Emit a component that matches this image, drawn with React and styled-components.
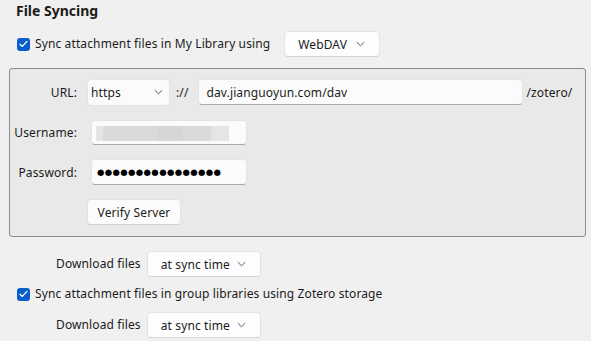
import React from "react";
import styled, { createGlobalStyle } from "styled-components";

const Global = createGlobalStyle`
  html, body { margin: 0; padding: 0; background: #f0f0f0; }
  body { font-family: "Noto Sans", "Open Sans", sans-serif; font-size: 12px; letter-spacing: 0.12px; color: #1b1b1b; }
`;

const Page = styled.div`
  width: 591px;
  height: 341px;
  overflow: hidden;
  box-sizing: border-box;
  padding-top: 1px;
`;

const Heading = styled.h2`
  margin: 0 0 0 16px;
  font-size: 14px;
  font-weight: 700;
  line-height: 20px;
  letter-spacing: 0;
  color: #1b1b1b;
`;

const Row = styled.div`
  display: flex;
  align-items: center;
  gap: ${p => p.$gap ?? 6}px;
  margin-left: ${p => p.$indent ?? 17}px;
  margin-top: ${p => p.$top ?? 0}px;
  height: ${p => p.$h ?? 26}px;
`;

const Check = styled.span`
  width: 13px;
  height: 13px;
  border-radius: 3px;
  background: #0a5ec9;
  display: inline-flex;
  align-items: center;
  justify-content: center;
  flex: none;
`;

const Label = styled.span`
  white-space: nowrap;
  line-height: 16px;
`;

const Dropdown = styled.div`
  box-sizing: border-box;
  width: ${p => p.$w}px;
  height: 26px;
  margin-left: ${p => p.$ml ?? 0}px;
  background: #fdfdfd;
  border: 1px solid #e3e3e3;
  border-bottom-color: #d4d4d4;
  border-radius: 4px;
  display: flex;
  align-items: center;
  justify-content: space-between;
  padding: 0 14px 0 13px;
  white-space: nowrap;
`;

const Group = styled.div`
  box-sizing: border-box;
  margin: 11px 5px 0 9px;
  height: 169px;
  border: 1px solid #8d8d8d;
  border-radius: 3px;
  background: #e9e9e9;
  padding: 10px 0 0 0;
  display: grid;
  grid-template-columns: 67px 1fr;
  column-gap: 10px;
  grid-auto-rows: 26px;
  row-gap: 14px;
  align-items: center;
`;

const FieldLabel = styled.span`
  text-align: right;
  white-space: nowrap;
`;

const Controls = styled.div`
  display: flex;
  align-items: center;
  gap: ${p => p.$gap ?? 0}px;
  padding-left: ${p => p.$pl ?? 0}px;
  height: 26px;
`;

const Select = styled.div`
  box-sizing: border-box;
  width: 83px;
  height: 27px;
  background: #fbfbfb;
  border: 1px solid #e4e4e4;
  border-radius: 4px;
  display: flex;
  align-items: center;
  justify-content: space-between;
  padding: 0 6px 0 3px;
`;

const Sep = styled.span`
  margin: 0 9px 0 6px;
  white-space: nowrap;
`;

const TextInput = styled.div`
  box-sizing: border-box;
  width: ${p => p.$w}px;
  height: ${p => p.$h ?? 26}px;
  background: #fbfbfb;
  border: 1px solid #e4e4e4;
  border-bottom-color: #a9a9a9;
  border-radius: 4px;
  display: flex;
  align-items: center;
  padding-left: ${p => p.$pl ?? 6}px;
  white-space: nowrap;
  overflow: hidden;
`;

const Suffix = styled.span`
  margin-left: 4px;
  white-space: nowrap;
`;

const Blur = styled.div`
  display: flex;
  height: 15px;
  margin-top: 2px;
`;

const BlurPart = styled.span`
  width: ${p => p.$w}px;
  height: 100%;
  background: ${p => p.$c};
`;

const Dots = styled.span`
  font-family: "DejaVu Sans", sans-serif;
  font-size: 8.5px;
  letter-spacing: 0.35px;
  color: #000;
`;

const Button = styled.div`
  box-sizing: border-box;
  width: 94px;
  height: 26px;
  background: #fbfbfb;
  border: 1px solid #e2e2e2;
  border-bottom-color: #d0d0d0;
  border-radius: 4px;
  display: flex;
  align-items: center;
  justify-content: center;
`;

const Chevron = () => (
  <svg width="9" height="6" viewBox="0 0 9 6">
    <path d="M0.8 1.2 L4.5 4.8 L8.2 1.2" fill="none" stroke="#5a5a5a" strokeWidth="1" />
  </svg>
);

const Tick = () => (
  <svg width="9" height="8" viewBox="0 0 9 8">
    <path d="M1 4.3 L3.3 6.4 L8 1.4" fill="none" stroke="#fff" strokeWidth="1.3" strokeLinecap="round" strokeLinejoin="round" />
  </svg>
);

export default function App() {
  return (
    <Page>
      <Global />
      <Heading>File Syncing</Heading>
      <Row $top={10} $gap={5}>
        <Check><Tick /></Check>
        <Label>Sync attachment files in My Library using</Label>
        <Dropdown $w={96} $ml={9}>
          <span>WebDAV</span>
          <Chevron />
        </Dropdown>
      </Row>
      <Group>
        <FieldLabel>URL:</FieldLabel>
        <Controls>
          <Select>
            <span>https</span>
            <Chevron />
          </Select>
          <Sep>://</Sep>
          <TextInput $w={325} $pl={8}>dav.jianguoyun.com/dav</TextInput>
          <Suffix>/zotero/</Suffix>
        </Controls>
        <FieldLabel>Username:</FieldLabel>
        <Controls $pl={4}>
          <TextInput $w={156} $h={25} $pl={4}>
            <Blur>
              <BlurPart $w={7} $c="#e5e5e5" />
              <BlurPart $w={54} $c="#dadada" />
              <BlurPart $w={26} $c="#d6d6d6" />
              <BlurPart $w={28} $c="#dadada" />
              <BlurPart $w={18} $c="#e5e5e5" />
            </Blur>
          </TextInput>
        </Controls>
        <FieldLabel>Password:</FieldLabel>
        <Controls $pl={4}>
          <TextInput $w={156} $pl={5}>
            <Dots>●●●●●●●●●●●●●●●●</Dots>
          </TextInput>
        </Controls>
        <span />
        <Controls>
          <Button>Verify Server</Button>
        </Controls>
      </Group>
      <Row $top={14} $indent={56} $gap={6}>
        <Label>Download files</Label>
        <Dropdown $w={114}>
          <span>at sync time</span>
          <Chevron />
        </Dropdown>
      </Row>
      <Row $top={6} $h={22} $gap={5}>
        <Check><Tick /></Check>
        <Label>Sync attachment files in group libraries using Zotero storage</Label>
      </Row>
      <Row $top={7} $indent={56} $gap={6}>
        <Label>Download files</Label>
        <Dropdown $w={114}>
          <span>at sync time</span>
          <Chevron />
        </Dropdown>
      </Row>
    </Page>
  );
}
